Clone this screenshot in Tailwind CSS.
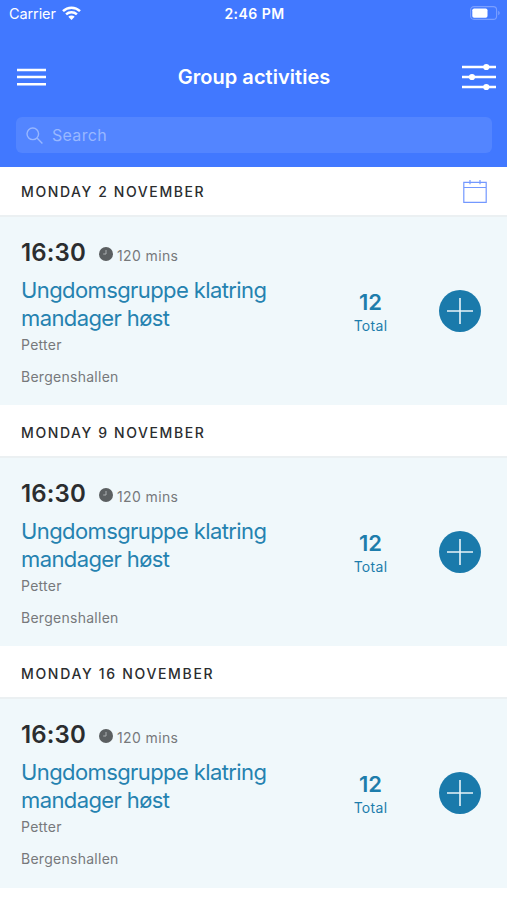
<!DOCTYPE html>
<html lang="en">
<head>
  <meta charset="UTF-8">
  <meta name="viewport" content="width=device-width, initial-scale=1.0">
  <title>Group activities</title>
  <script src="https://cdn.jsdelivr.net/npm/@tailwindcss/browser@4"></script>
</head>
<body class="bg-white font-['Inter',sans-serif] text-[#2b2d2f] h-[900px] overflow-hidden">
  <header class="bg-[#4178ff] text-white h-[167px]">
    <!-- Status bar -->
    <div class="grid grid-cols-3 items-center h-7 pl-[9px] pr-[7px]">
      <div class="flex items-center gap-1.5 text-[14.5px]">
        <span class="tracking-[-0.1px]">Carrier</span>
        <svg class="w-[19px] h-[14px] -mt-0.5" viewBox="0 0 19 14" fill="none" stroke="currentColor" stroke-width="2.5">
          <path d="M1 5.2a12.2 12.2 0 0 1 17 0M4.1 8.3a7.9 7.9 0 0 1 10.8 0" />
          <path d="M9.5 14L6.3 10.7a4.6 4.6 0 0 1 6.4 0z" fill="currentColor" stroke="none" />
        </svg>
      </div>
      <div class="text-center text-sm font-semibold tracking-[0.45px]">2:46 PM</div>
      <div class="flex justify-end">
        <svg class="w-[30px] h-[14px] -mt-0.5" viewBox="0 0 30 14">
          <rect x=".6" y=".6" width="26" height="12.8" rx="3.4" fill="none" stroke="#7b9fff" stroke-width="1.1" />
          <rect x="2.3" y="2.4" width="15.2" height="9.3" rx="1.8" fill="#fff" />
          <path d="M28.2 4.8v4.4c2-.8 2-3.6 0-4.4z" fill="#7b9fff" />
        </svg>
      </div>
    </div>

    <!-- Title bar -->
    <div class="flex items-center justify-between h-[98px] pl-[17px] pr-[11px]">
      <svg class="w-[29px] h-[18px]" viewBox="0 0 29 18" stroke="#fff" stroke-width="2.4">
        <path d="M0 2h29M0 9h29M0 16.2h29" />
      </svg>
      <h1 class="text-xl font-semibold tracking-[0.05px]">Group activities</h1>
      <svg class="w-[34px] h-[28px]" viewBox="0 0 34 28" stroke="#fff" stroke-width="2.3">
        <path d="M0 4h34M0 14h34M0 24h34" />
        <g fill="#fff" stroke="none">
          <circle cx="24.3" cy="4" r="3.1" />
          <circle cx="10" cy="14" r="3.1" />
          <circle cx="24.3" cy="24" r="3.1" />
        </g>
      </svg>
    </div>

    <!-- Search -->
    <div class="flex items-center gap-[9px] h-9 ml-4 mr-[15px] -mt-[9px] pl-2.5 rounded-md bg-[#5385ff] text-[#98b7ff]">
      <svg class="w-[17px] h-[17px]" viewBox="0 0 17 17" fill="none" stroke="currentColor" stroke-width="1.4">
        <circle cx="6.8" cy="6.8" r="5.8" />
        <path d="M11 11l5.4 5.4" />
      </svg>
      <span class="text-base tracking-[0.3px]">Search</span>
    </div>
  </header>

  <main>
    <section>
      <div class="flex items-center justify-between h-[50px] pt-0.5 pl-[21px] pr-5 border-b-2 border-[#ebf0f2]">
        <h2 class="text-sm font-medium tracking-[1.6px]">MONDAY 2 NOVEMBER</h2>
        <svg class="w-6 h-6" viewBox="0 0 24 24" fill="none" stroke="#7398ff" stroke-width="1.2">
          <path d="M.8 2.3h22.4v20H.8zM.8 7.5h22.4M7 0v4.3M17 0v4.3" />
        </svg>
      </div>
      <div class="flex h-[188px] pl-[21px] pt-5 pr-[26px] bg-[#f0f8fb]">
        <div class="w-[300px]">
          <div class="flex items-center h-8">
            <span class="text-2xl font-semibold tracking-[0.15px]">16:30</span>
            <svg class="w-[14px] h-[14px] ml-[13px] mt-0.5" viewBox="0 0 14 14">
              <circle cx="7" cy="7" r="7" fill="#5b5f61" />
              <path d="M7 3v4H4.2" fill="none" stroke="#a9adaf" />
            </svg>
            <span class="ml-1 mt-1.5 text-sm tracking-[0.38px] text-[#77797b]">120 mins</span>
          </div>
          <h3 class="mt-[7px] text-[22px] leading-7 tracking-[-0.6px] text-[#2582b0]">Ungdomsgruppe klatring<br>mandager høst</h3>
          <p class="mt-[3px] text-sm tracking-[0.27px] text-[#77797b]">Petter</p>
          <p class="mt-3 text-sm tracking-[0.27px] text-[#77797b]">Bergenshallen</p>
        </div>
        <div class="w-[99px] pt-[51px] text-center text-[#1d7dac]">
          <div class="text-[22px] leading-7 font-semibold">12</div>
          <div class="text-sm tracking-[0.3px]">Total</div>
        </div>
        <svg class="w-[42px] h-[42px] mt-[53px] ml-auto" viewBox="0 0 42 42">
          <circle cx="21" cy="21" r="21" fill="#1a7aab" />
          <path d="M21 8v26M8 21h26" stroke="#e8f4f9" stroke-width="1.6" />
        </svg>
      </div>
    </section>

    <section>
      <div class="flex items-center h-[53px] pl-[21px] pt-[5px] border-b-2 border-[#ebf0f2]">
        <h2 class="text-sm font-medium tracking-[1.6px]">MONDAY 9 NOVEMBER</h2>
      </div>
      <div class="flex h-[188px] pl-[21px] pt-5 pr-[26px] bg-[#f0f8fb]">
        <div class="w-[300px]">
          <div class="flex items-center h-8">
            <span class="text-2xl font-semibold tracking-[0.15px]">16:30</span>
            <svg class="w-[14px] h-[14px] ml-[13px] mt-0.5" viewBox="0 0 14 14">
              <circle cx="7" cy="7" r="7" fill="#5b5f61" />
              <path d="M7 3v4H4.2" fill="none" stroke="#a9adaf" />
            </svg>
            <span class="ml-1 mt-1.5 text-sm tracking-[0.38px] text-[#77797b]">120 mins</span>
          </div>
          <h3 class="mt-[7px] text-[22px] leading-7 tracking-[-0.6px] text-[#2582b0]">Ungdomsgruppe klatring<br>mandager høst</h3>
          <p class="mt-[3px] text-sm tracking-[0.27px] text-[#77797b]">Petter</p>
          <p class="mt-3 text-sm tracking-[0.27px] text-[#77797b]">Bergenshallen</p>
        </div>
        <div class="w-[99px] pt-[51px] text-center text-[#1d7dac]">
          <div class="text-[22px] leading-7 font-semibold">12</div>
          <div class="text-sm tracking-[0.3px]">Total</div>
        </div>
        <svg class="w-[42px] h-[42px] mt-[53px] ml-auto" viewBox="0 0 42 42">
          <circle cx="21" cy="21" r="21" fill="#1a7aab" />
          <path d="M21 8v26M8 21h26" stroke="#e8f4f9" stroke-width="1.6" />
        </svg>
      </div>
    </section>

    <section>
      <div class="flex items-center h-[53px] pl-[21px] pt-[5px] border-b-2 border-[#ebf0f2]">
        <h2 class="text-sm font-medium tracking-[1.68px]">MONDAY 16 NOVEMBER</h2>
      </div>
      <div class="flex h-[189px] pl-[21px] pt-5 pr-[26px] bg-[#f0f8fb]">
        <div class="w-[300px]">
          <div class="flex items-center h-8">
            <span class="text-2xl font-semibold tracking-[0.15px]">16:30</span>
            <svg class="w-[14px] h-[14px] ml-[13px] mt-0.5" viewBox="0 0 14 14">
              <circle cx="7" cy="7" r="7" fill="#5b5f61" />
              <path d="M7 3v4H4.2" fill="none" stroke="#a9adaf" />
            </svg>
            <span class="ml-1 mt-1.5 text-sm tracking-[0.38px] text-[#77797b]">120 mins</span>
          </div>
          <h3 class="mt-[7px] text-[22px] leading-7 tracking-[-0.6px] text-[#2582b0]">Ungdomsgruppe klatring<br>mandager høst</h3>
          <p class="mt-[3px] text-sm tracking-[0.27px] text-[#77797b]">Petter</p>
          <p class="mt-3 text-sm tracking-[0.27px] text-[#77797b]">Bergenshallen</p>
        </div>
        <div class="w-[99px] pt-[51px] text-center text-[#1d7dac]">
          <div class="text-[22px] leading-7 font-semibold">12</div>
          <div class="text-sm tracking-[0.3px]">Total</div>
        </div>
        <svg class="w-[42px] h-[42px] mt-[53px] ml-auto" viewBox="0 0 42 42">
          <circle cx="21" cy="21" r="21" fill="#1a7aab" />
          <path d="M21 8v26M8 21h26" stroke="#e8f4f9" stroke-width="1.6" />
        </svg>
      </div>
    </section>
  </main>
</body>
</html>
